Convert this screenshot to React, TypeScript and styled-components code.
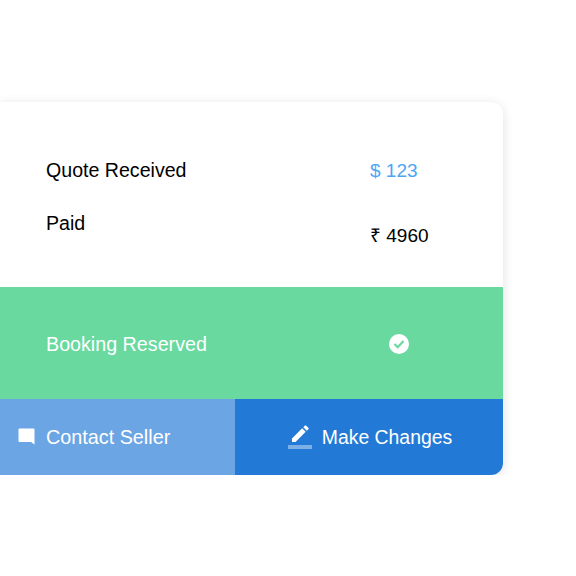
import styled, { createGlobalStyle } from 'styled-components';

const GlobalStyle = createGlobalStyle`
  body {
    margin: 0;
    background: #fff;
    font-family: "Liberation Sans", Arial, sans-serif;
  }
`

const Card = styled.div`
  width: 503px;
  margin-top: 102px;
  border-radius: 0 12px 12px 0;
  overflow: hidden;
  background: #fff;
  box-shadow: 0 2px 12px rgba(0, 0, 0, 0.12);
`

const Summary = styled.div`
  display: grid;
  grid-template-columns: 324px auto;
  height: 185px;
  padding: 56px 0 0 46px;
  box-sizing: border-box;
`

const Column = styled.div<{ $gap: number }>`
  display: flex;
  flex-direction: column;
  gap: ${p => p.$gap}px;
`

const Label = styled.span`
  font-size: 19.6px;
  line-height: 24px;
  color: #000;
`

const Value = styled.span<{ $accent?: boolean }>`
  padding-top: 1px;
  font-size: 19px;
  line-height: 24px;
  color: ${p => (p.$accent ? '#4da6f5' : '#000')};
`

const Status = styled.div`
  display: grid;
  grid-template-columns: 343px 20px;
  align-items: center;
  height: 112px;
  padding: 2px 0 0 46px;
  box-sizing: border-box;
  background: #69d9a0;
  color: #fff;
  font-size: 19.7px;
`

const Actions = styled.div`
  display: grid;
  grid-template-columns: 235px 268px;
  height: 76px;
`

const Action = styled.button<{ $primary?: boolean; $gap: number }>`
  display: flex;
  align-items: center;
  justify-content: ${p => (p.$primary ? 'center' : 'flex-start')};
  gap: ${p => p.$gap}px;
  padding: 0 0 0 ${p => (p.$primary ? 2 : 18)}px;
  border: 0;
  background: ${p => (p.$primary ? '#237ad6' : '#6ba5e4')};
  color: #fff;
  font-family: inherit;
  font-size: ${p => (p.$primary ? 19.4 : 19.8)}px;
`

const ActionIcon = styled.svg`
  margin-top: -1px;
`

function App() {
  return (
    <>
      <GlobalStyle />
      <Card>
        <Summary>
          <Column $gap={29}>
            <Label>Quote Received</Label>
            <Label>Paid</Label>
          </Column>
          <Column $gap={40}>
            <Value $accent>$ 123</Value>
            <Value>₹ 4960</Value>
          </Column>
        </Summary>
        <Status>
          <span>Booking Reserved</span>
          <svg width="20" height="20" viewBox="0 0 20 20">
            <circle cx="10" cy="10" r="10" fill="#fff" />
            <path d="M5.500 10l3.200 3.200 5.800-6.200" fill="none" stroke="#69d9a0" strokeWidth="2.200" />
          </svg>
        </Status>
        <Actions>
          <Action $gap={11}>
            <ActionIcon width="17" height="17" viewBox="0 0 17 17">
              <path d="M1.500 0.500h14a1 1 0 0 1 1 1V16.500l-3.500-2.500H1.500a1 1 0 0 1-1-1V1.500a1 1 0 0 1 1-1z" fill="#fff" />
            </ActionIcon>
            Contact Seller
          </Action>
          <Action $primary $gap={10}>
            <ActionIcon width="24" height="24" viewBox="0 0 24 24">
              <path d="M4 13.500L14.200 3.300l3.500 3.500L7.500 17H4z" fill="#fff" />
              <path d="M15.300 2.200l1.500-1.500a1 1 0 0 1 1.400 0l2.100 2.100a1 1 0 0 1 0 1.400l-1.500 1.500z" fill="#fff" />
              <rect y="20" width="24" height="4" fill="#fff" opacity="0.4" />
            </ActionIcon>
            Make Changes
          </Action>
        </Actions>
      </Card>
    </>
  );
}

export default App;
